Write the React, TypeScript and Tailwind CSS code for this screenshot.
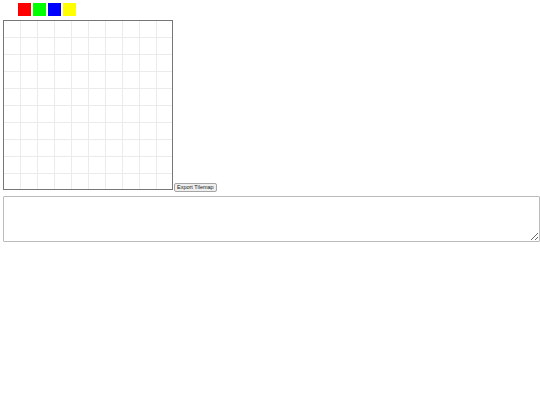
const COLORS = ["bg-[#ff0000]", "bg-[#00ff00]", "bg-[#0000ff]", "bg-[#ffff00]"];

export default function App() {
  const cells = Array.from({ length: 100 });
  return (
    <div className="w-[540px] h-[405px] bg-white pl-[3px] pt-[3px] font-['Liberation_Sans',Arial,sans-serif]">
      <div className="flex gap-[2px] ml-[15px] h-[13px]">
        {COLORS.map((c) => (
          <div key={c} className={`w-[13px] h-[13px] ${c}`} />
        ))}
      </div>
      <div className="flex items-end gap-[1px] mt-[4px]">
        <div className="w-[170px] h-[170px] border border-[#777] overflow-hidden">
          <div className="grid grid-cols-[repeat(10,17px)] w-[170px]">
            {cells.map((_, i) => (
              <div
                key={i}
                className="w-[17px] h-[17px] border-r border-b border-[#ebebeb]"
              />
            ))}
          </div>
        </div>
        <button className="mb-[-2px] h-[9px] px-[2px] flex items-center text-[5.5px] leading-none text-[#222] bg-[#efefef] border border-[#a5a5a5] rounded-[2px]">
          Export Tilemap
        </button>
      </div>
      <textarea className="block mt-[6px] w-[537px] h-[46px] border border-[#bbb] rounded-[1px] bg-white" />
    </div>
  );
}
